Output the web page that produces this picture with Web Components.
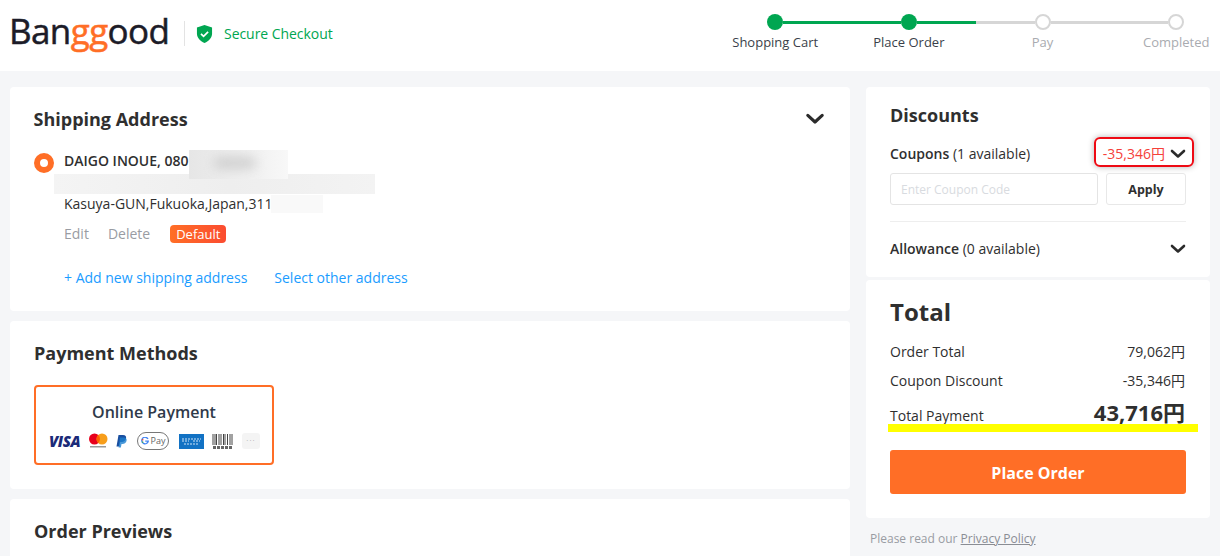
<!DOCTYPE html>
<html lang="en">
<head>
<meta charset="utf-8">
<title>Secure Checkout</title>
<style>
  html, body { margin: 0; height: 556px; overflow: hidden; background: #f5f6f8; }
  body { font: 14px/20px "Open Sans", "Noto Sans CJK JP", sans-serif; color: #2f2f2f; }
</style>
</head>
<body>
<checkout-page></checkout-page>
<script>
(function registerCheckout() {
  'use strict';

  function define(name, css, html) {
    customElements.define(name, class extends HTMLElement {
      constructor() {
        super();
        this.attachShadow({ mode: 'open' }).innerHTML = `<style>${css}</style>${html}`;
      }
    });
  }

  const chevron = `<svg width="16" height="10" viewBox="0 0 16 10"><path d="M2 2l6 5.5L14 2" fill="none" stroke="#2b2b2b" stroke-width="2.6" stroke-linecap="round" stroke-linejoin="round"/></svg>`;

  define('progress-step', `
    :host { display: block; width: 133.67px; font-size: 13px; line-height: 18px; color: #3a3f4a; text-align: center; }
    :host([todo]) { color: #a9abb0; }
    .rail { display: flex; align-items: center; height: 16px; margin-bottom: 3px; }
    i { flex: 1; height: 3px; background: var(--l, #00a651); }
    i + b + i { background: var(--r, #00a651); }
    b { width: 16px; height: 16px; box-sizing: border-box; border-radius: 50%; background: #00a651; }
    :host([todo]) b { background: #fff; border: 2px solid #d6d6d6; }
  `, `<div class="rail"><i></i><b></b><i></i></div><slot></slot>`);

  define('checkout-header', `
    :host { display: flex; align-items: flex-start; justify-content: space-between; height: 71px; background: #fff; overflow: hidden; }
    .brand { display: flex; align-items: center; height: 66px; padding-left: 9px; }
    .logo { width: 159px; font-size: 35px; font-weight: 400; -webkit-text-stroke: .5px currentColor; line-height: 44px; letter-spacing: -.6px; color: #1c1c28; white-space: nowrap; margin-top: -4px; }
    .logo span { color: #ff6e26; }
    .sep { width: 1px; height: 25px; background: #e3e3e3; margin: 0 11px 0 16px; }
    svg { margin: 1px 11px 0 0; }
    .secure { margin-top: 2px; font-size: 14px; letter-spacing: -.05px; color: #00a651; }
    .steps { display: flex; padding-top: 14px; margin-right: -23px; }
    progress-step:first-child { --l: transparent; }
    progress-step:nth-child(2) { --r: linear-gradient(90deg, #00a651 59px, #d6d6d6 59px); }
    progress-step:nth-child(3) { --l: #d6d6d6; --r: #d6d6d6; }
    progress-step:last-child { --l: #d6d6d6; --r: transparent; }
  `, `
    <div class="brand">
      <div class="logo">Ban<span>gg</span>ood</div>
      <div class="sep"></div>
      <svg width="17" height="20" viewBox="0 0 18 20"><path d="M9 .5l8 2.700v6c0 4.800-3.200 8.300-8 10.300-4.800-2-8-5.500-8-10.300v-6z" fill="#00a651"/><path d="M5.300 9.800l2.700 2.700 4.800-4.800" fill="none" stroke="#fff" stroke-width="1.800"/></svg>
      <div class="secure">Secure Checkout</div>
    </div>
    <div class="steps">
      <progress-step>Shopping Cart</progress-step>
      <progress-step>Place Order</progress-step>
      <progress-step todo>Pay</progress-step>
      <progress-step todo>Completed</progress-step>
    </div>
  `);

  define('checkout-card', `
    :host { display: block; box-sizing: border-box; background: #fff; border-radius: 4px; }
  `, `<slot></slot>`);

  define('shipping-address', `
    :host { display: block; position: relative; height: 224px; padding: 19px 24px 0 24px; box-sizing: border-box; }
    h2 { margin: 0 0 0 -.5px; font-size: 18px; line-height: 26px; font-weight: 700; color: #2f2f2f; }
    .toggle { position: absolute; right: 25px; top: 26px; line-height: 0; }
    .toggle svg { width: 20px; height: 12px; }
    .who { display: flex; align-items: center; gap: 10px; margin-top: 19px; font-weight: 600; color: #2f2f2f; height: 20px; }
    .radio { width: 20px; height: 20px; border-radius: 50%; box-sizing: border-box; border: 6px solid #ff6e26; background: #fff; margin: 3px 0 0 0; }
    .lines { padding-left: 30px; }
    .street { height: 20px; margin-top: 1px; }
    .city { margin-top: 2px; height: 20px; color: #2f2f2f; }
    .actions { display: flex; align-items: center; margin-top: 10px; height: 20px; color: #999ca3; }
    .actions span + span { margin-left: 19px; }
    .actions .badge { margin-left: 20px; height: 18px; line-height: 18px; padding: 0 6px; border-radius: 4px; font-size: 13px; color: #fff; background: linear-gradient(90deg, #ff6e26, #fb4c30); }
    .links { display: flex; gap: 27px; margin-top: 24px; color: #1a9cff; }
    .mask { position: absolute; }
    .blur { position: absolute; background: #bdbdbd; filter: blur(6px); opacity: .7; }
  `, `
    <h2>Shipping Address</h2>
    <div class="toggle">${chevron}</div>
    <div class="who"><div class="radio"></div><div>DAIGO INOUE, 080</div></div>
    <div class="lines">
      <div class="street"></div>
      <div class="city">Kasuya-GUN,Fukuoka,Japan,311</div>
      <div class="actions"><span>Edit</span><span>Delete</span><span class="badge">Default</span></div>
      <div class="links"><div>+ Add new shipping address</div><div>Select other address</div></div>
    </div>
    <div class="mask" style="left:44px;top:87px;width:321px;height:20px;background:linear-gradient(90deg,#f4f4f4,#eeeeee 55%,#f3f3f3)"></div>
    <div class="mask" style="left:179px;top:63px;width:99px;height:29px;overflow:hidden;background:linear-gradient(90deg,#e6e6e6,#efefef 60%,#f8f8f8)"><div class="blur" style="left:26px;top:8px;width:40px;height:10px"></div></div>
    <div class="mask" style="left:261px;top:108px;width:52px;height:18px;background:#f9f9f9"></div>
  `);

  define('payment-methods', `
    :host { display: block; height: 168px; padding: 19px 24px 0; box-sizing: border-box; }
    h2 { margin: 0; font-size: 18px; line-height: 26px; font-weight: 700; color: #2f2f2f; }
    .option { box-sizing: border-box; width: 240px; height: 80px; margin-top: 19px; border: 2px solid #ff6e26; border-radius: 4px; padding-top: 13px; text-align: center; }
    .title { font-size: 16px; line-height: 24px; font-weight: 600; color: #2f3a4a; }
    .icons { display: flex; align-items: center; height: 18px; margin: 8px 0 0 13px; }
    .visa { font: italic 800 15px/18px "Open Sans", sans-serif; letter-spacing: -.4px; color: #1a2a78; width: 40px; text-align: left; }
    svg { display: block; flex: none; }
    .gpay { display: flex; align-items: center; justify-content: center; gap: 2px; box-sizing: border-box; flex: none; width: 32px; height: 18px; margin: 0 10px 0 10px; border: 1px solid #777; border-radius: 9px; font-size: 9px; line-height: 14px; color: #666; }
    .more { box-sizing: border-box; width: 18px; height: 16px; margin-left: 9px; border-radius: 3px; background: #f4f4f4; color: #aaa; font-size: 8px; line-height: 14px; letter-spacing: 1px; text-align: center; }
  `, `
    <h2>Payment Methods</h2>
    <div class="option">
      <div class="title">Online Payment</div>
      <div class="icons">
        <div class="visa">VISA</div>
        <svg width="19" height="16" viewBox="0 0 19 16"><circle cx="5.500" cy="6" r="5.500" fill="#e8001c"/><circle cx="13" cy="6" r="5.500" fill="#f79e1b"/><path d="M9.250 2a5.500 5.500 0 0 1 0 8 5.500 5.500 0 0 1 0-8z" fill="#ff5f00"/><rect x="1" y="13" width="16" height="1.500" fill="#999"/></svg>
        <svg style="margin-left:8px" width="11" height="13" viewBox="0 0 11 13"><path d="M2.500 0h4.500c2.500 0 3.500 1.500 3 3.500-.5 2.300-2 3.500-4.300 3.500H4.200l-.8 4.500H.5z" fill="#1a4fa0"/><path d="M4 2.500h4.500c1.800.5 2.500 1.800 2 3.500-.5 2-2.200 3-4 3H5.500l-.6 3.500H2.600z" fill="#1d7fd0" opacity=".8"/></svg>
        <div class="gpay"><svg width="8" height="8" viewBox="0 0 8 8"><path d="M7 2A3.300 3.300 0 1 0 7.300 4.200H4.200" fill="none" stroke="#4285f4" stroke-width="1.300"/><path d="M1.100 2.200L2.300 3.200" stroke="#ea4335" stroke-width="1.300"/><path d="M1 5.500l1.300-.8" stroke="#34a853" stroke-width="1.300"/></svg><span>Pay</span></div>
        <svg width="25" height="15" viewBox="0 0 25 15"><rect width="25" height="15" fill="#1272c4"/><path d="M3 5h19M3 7h7M14 7h7M5 10h15" stroke="#cfe4f7" stroke-width="1" stroke-dasharray="2 1"/></svg>
        <svg style="margin-left:8px" width="21" height="15" viewBox="0 0 21 15"><path d="M1 0v11M3 0v11M4.500 0v11M7 0v11M9 0v11M11.500 0v11M13 0v11M15.500 0v11M18 0v11M20 0v11" stroke="#444" stroke-width="1"/><path d="M1 13.500h19" stroke="#666" stroke-width="3" stroke-dasharray="3 1"/></svg>
        <div class="more">···</div>
      </div>
    </div>
  `);

  define('order-previews', `
    :host { display: block; height: 80px; padding: 19px 24px 0; box-sizing: border-box; }
    h2 { margin: 0; font-size: 18px; line-height: 26px; font-weight: 700; color: #2f2f2f; }
  `, `<h2>Order Previews</h2>`);

  define('discount-panel', `
    :host { display: block; position: relative; height: 190px; padding: 15px 24px 0; box-sizing: border-box; }
    h2 { margin: 0; font-size: 18px; line-height: 26px; font-weight: 700; color: #2f2f2f; }
    .row { display: flex; align-items: center; justify-content: space-between; height: 20px; color: #2f2f2f; }
    .row b { font-weight: 600; }
    .coupons { margin-top: 16px; }
    .value { display: flex; align-items: center; gap: 5px; color: #f5413a; }
    .value svg, .allow svg { display: block; }
    .mark { position: absolute; left: 228px; top: 50px; width: 100px; height: 30px; box-sizing: border-box; border: 2px solid #ee0a14; border-radius: 6px; box-shadow: 0 0 6px rgba(0,0,0,.3); }
    .form { display: flex; gap: 8px; margin-top: 9px; }
    .input { box-sizing: border-box; width: 208px; height: 32px; border: 1px solid #e4e4e4; border-radius: 3px; padding-left: 10px; font-size: 12px; line-height: 31px; color: #d8dbe0; }
    .apply { box-sizing: border-box; flex: 1; height: 32px; border: 1px solid #e8e8e8; border-radius: 3px; font-size: 12.5px; font-weight: 700; line-height: 31px; text-align: center; color: #2f2f2f; }
    hr { border: 0; border-top: 1px solid #eeeeee; margin: 16px 0 0; }
    .allow { margin-top: 17px; }
  `, `
    <h2>Discounts</h2>
    <div class="row coupons"><div><b>Coupons</b> (1 available)</div><div class="value">-35,346円${chevron}</div></div>
    <div class="mark"></div>
    <div class="form"><div class="input">Enter Coupon Code</div><div class="apply">Apply</div></div>
    <hr>
    <div class="row allow"><div><b>Allowance</b> (0 available)</div>${chevron}</div>
  `);

  define('total-panel', `
    :host { display: block; position: relative; height: 238px; padding: 16px 24px 0; box-sizing: border-box; }
    h2 { margin: 0; font-size: 24px; line-height: 32px; font-weight: 700; color: #2f2f2f; }
    .row { display: flex; justify-content: space-between; align-items: center; height: 20px; margin: 9px 1px 0 0; }
    .first { margin-top: 14px; }
    .pay { height: 30px; margin-top: 8px; }
    .pay span { margin-top: 4px; }
    .pay strong { margin-bottom: 4px; font-size: 22px; line-height: 30px; font-weight: 700; color: #2f2f2f; }
    .line { position: absolute; left: 22px; right: 12px; top: 144px; height: 8px; background: #ffff00; }
    button { display: block; width: 100%; height: 44px; margin-top: 21px; border: 0; border-radius: 3px; background: #ff6e26; color: #fff; font: 700 16px/44px "Open Sans", sans-serif; }
  `, `
    <h2>Total</h2>
    <div class="row first"><span>Order Total</span><span>79,062円</span></div>
    <div class="row"><span>Coupon Discount</span><span>-35,346円</span></div>
    <div class="row pay"><span>Total Payment</span><strong>43,716円</strong></div>
    <div class="line"></div>
    <button type="button">Place Order</button>
  `);

  define('checkout-page', `
    :host { display: block; }
    main { display: flex; gap: 16px; padding: 16px 10px 0; align-items: flex-start; }
    .left { width: 840px; display: flex; flex-direction: column; gap: 10px; }
    .right { width: 344px; display: flex; flex-direction: column; gap: 3px; }
    .policy { margin: 9px 0 0 4px; font-size: 12px; line-height: 18px; color: #999ca3; }
    .policy u { color: #8a8d94; }
  `, `
    <checkout-header></checkout-header>
    <main>
      <div class="left">
        <checkout-card><shipping-address></shipping-address></checkout-card>
        <checkout-card><payment-methods></payment-methods></checkout-card>
        <checkout-card><order-previews></order-previews></checkout-card>
      </div>
      <div class="right">
        <checkout-card><discount-panel></discount-panel></checkout-card>
        <checkout-card><total-panel></total-panel></checkout-card>
        <div class="policy">Please read our <u>Privacy Policy</u></div>
      </div>
    </main>
  `);
})();
</script>
</body>
</html>
